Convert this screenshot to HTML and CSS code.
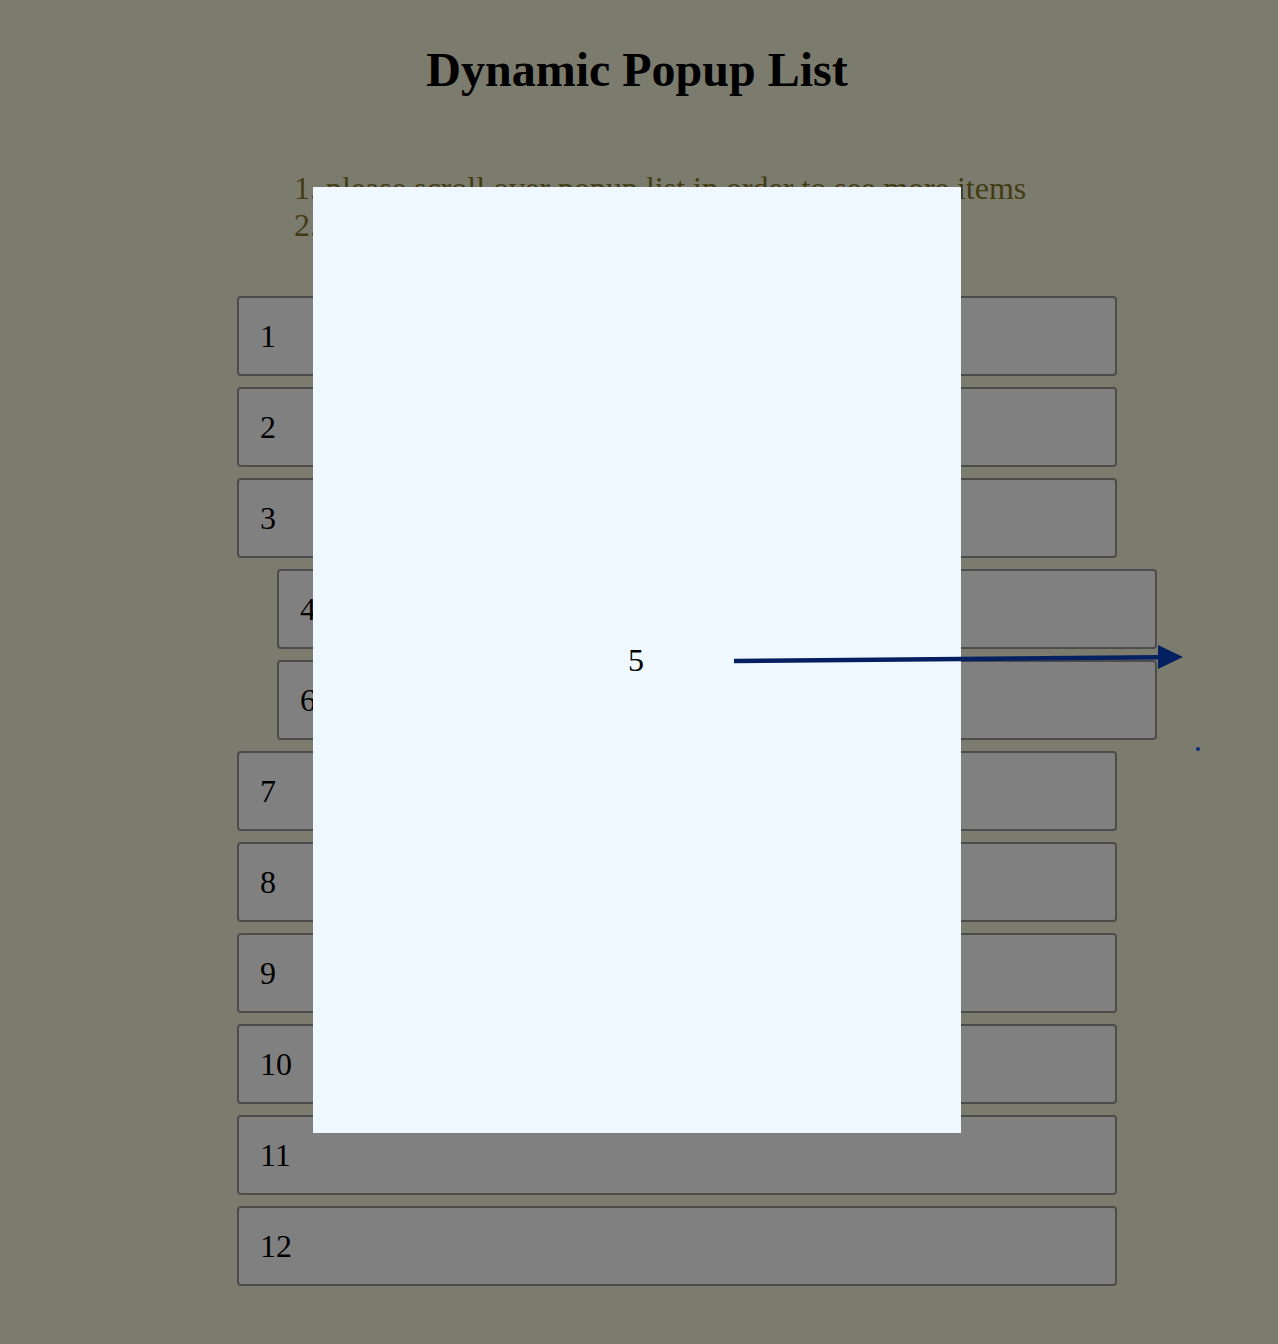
FILE: index.html
```html
<!DOCTYPE html>
<html lang="en">
<head>
<meta charset="utf-8">
<title>Dynamic Popup List</title>
<link rel="stylesheet" href="styles.css">
</head>
<body>
<main class="page">
  <h1 class="title">Dynamic Popup List</h1>
  <ol class="notes">
    <li>please scroll over popup list in order to see more items</li>
    <li>please click an item to open it in a popup</li>
  </ol>
  <ul class="items">
    <li class="item">1</li>
    <li class="item">2</li>
    <li class="item">3</li>
    <li class="item item-shift">4</li>
    <li class="item item-shift">6</li>
    <li class="item">7</li>
    <li class="item">8</li>
    <li class="item">9</li>
    <li class="item">10</li>
    <li class="item">11</li>
    <li class="item">12</li>
  </ul>
  <div class="popup"><span class="popup-label">5</span></div>
  <svg class="pointer" width="1278" height="1344" viewBox="0 0 1278 1344" aria-hidden="true">
    <line x1="734" y1="661" x2="1160" y2="657.3" stroke="#052060" stroke-width="4.5"/>
    <polygon points="1158,645 1183,657 1158,669" fill="#052060"/>
    <circle cx="1198" cy="749" r="2" fill="#0a2a80"/>
  </svg>
</main>
</body>
</html>
```

FILE: styles.css
```css
html, body {
  margin: 0;
  padding: 0;
  background: #7b7b6e;
}

body {
  font-family: "Liberation Serif", "Times New Roman", serif;
  color: #000;
}

.page {
  position: relative;
  height: 1344px;
  overflow: hidden;
}

.title {
  margin: 42px 0 0;
  padding-right: 4px;
  font-size: 48px;
  line-height: 55px;
  font-weight: bold;
  text-align: center;
}

.notes {
  margin: 73px 0 0;
  padding: 0 0 0 294px;
  list-style-position: inside;
  font-size: 32px;
  line-height: 37px;
  color: #423c14;
}

.items {
  list-style: none;
  margin: 52px 0 0 237px;
  padding: 0;
  display: flex;
  flex-direction: column;
  align-items: flex-start;
  gap: 11px;
}

.item {
  box-sizing: border-box;
  width: 880px;
  height: 80px;
  display: flex;
  align-items: center;
  padding-left: 21px;
  background: #808080;
  border: 2px solid #4c4c4c;
  border-radius: 4px;
  font-size: 32px;
}

.item-shift {
  margin-left: 40px;
}

.popup {
  position: absolute;
  left: 313px;
  top: 187px;
  width: 648px;
  height: 946px;
  background: #f0f8ff;
  display: flex;
  align-items: center;
  justify-content: center;
}

.popup-label {
  font-size: 32px;
  line-height: 37px;
  margin-left: -2px;
}

.pointer {
  position: absolute;
  left: 0;
  top: 0;
  pointer-events: none;
}
```
